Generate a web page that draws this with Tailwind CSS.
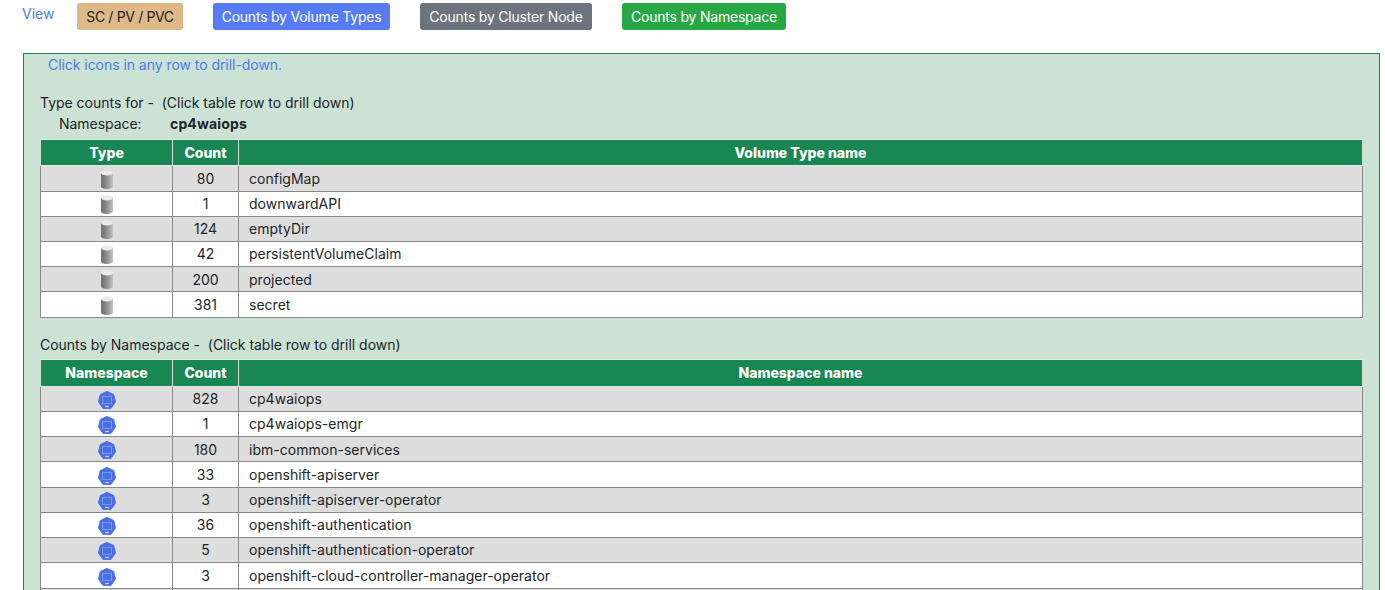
<!DOCTYPE html>
<html lang="en"><head><meta charset="utf-8"><title>Counts by Namespace</title>
<script src="https://cdn.jsdelivr.net/npm/@tailwindcss/browser@4"></script></head>
<body class="bg-white h-[590px] overflow-hidden font-['Inter','Liberation_Sans',sans-serif] text-[14px] leading-[21px] text-[#212529]">
<svg class="absolute w-0 h-0"><defs>
<linearGradient id="g"><stop offset="0" stop-color="#757575"/><stop offset=".25" stop-color="#7a7a7a"/><stop offset=".75" stop-color="#a8a8a8"/><stop offset="1" stop-color="#c4c4c4"/></linearGradient>
<symbol id="cyl" viewBox="0 0 12 19"><path d="M0 3v13.500a6 2.500 0 0 0 12 0V3z" fill="url(#g)"/><ellipse cx="6" cy="2.800" rx="6" ry="2.600" fill="#eaeaea"/></symbol>
<symbol id="ns" viewBox="0 0 18 18"><path d="M9 .300 15.800 3.500 17.600 10.900 13 17.500H5L.400 10.900 2.200 3.500z" fill="#4b6de5" stroke="#4b6de5" stroke-width=".8" stroke-linejoin="round"/><rect x="4.500" y="5.500" width="9" height="7" fill="none" stroke="#6f9bf0"/><path d="M7.200 15.500h3.600" stroke="#c5d2fa" stroke-width="1.300"/></symbol>
</defs></svg>
<nav class="flex items-start pl-[22px] pt-[3px] h-[53px]">
<a class="w-[55px] text-[#4a80e8]">View</a>
<a class="w-[106px] h-[27px] mr-[30px] rounded-[3px] bg-[#deb887] text-center leading-[28px] whitespace-nowrap tracking-[-0.35px]">SC / PV / PVC</a>
<a class="w-[177px] h-[27px] mr-[30px] rounded-[3px] bg-[#567bf3] text-white text-center leading-[28px] whitespace-nowrap tracking-[-0.22px]">Counts by Volume Types</a>
<a class="w-[172px] h-[27px] mr-[30px] rounded-[3px] bg-[#6c757d] text-white text-center leading-[28px] whitespace-nowrap tracking-[-0.2px]">Counts by Cluster Node</a>
<a class="w-[164px] h-[27px] rounded-[3px] bg-[#28a745] text-white text-center leading-[28px] whitespace-nowrap tracking-[-0.22px]">Counts by Namespace</a>
</nav>
<main class="ml-[23px] w-[1357px] h-[537px] overflow-hidden border border-b-0 border-[#198754] bg-[#cce2d5] pl-4">
<div class="pl-2 h-[38px] text-[#4a80e8] tracking-[-0.05px]">Click icons in any row to drill-down.</div>
<div class="whitespace-pre tracking-[-0.02px]">Type counts for -  (Click table row to drill down)</div>
<div class="flex pl-[19px] h-[26px]"><span class="w-[111px] tracking-[-0.05px]">Namespace:</span><b class="tracking-[0.15px]">cp4waiops</b></div>
<section id="types" class="w-[1323px]"></section>
<div class="whitespace-pre h-[41px] pt-[16px] tracking-[-0.02px]">Counts by Namespace -  (Click table row to drill down)</div>
<section id="spaces" class="w-[1323px]"></section>
</main>
<script>
function table(id, heads, headHeight, icon, rows) {
  let h = `<div class="grid grid-cols-[133px_66px_1124px] border-y border-[#dfe8e2] font-extrabold text-white text-center leading-[25px]" style="height:${headHeight}px">` +
    heads.map((t, i) => `<div class="bg-[#198754] ${['border-r border-[#ddd] ml-px', 'border-r border-[#ddd]', 'mr-px'][i]}">${t}</div>`).join('') + '</div>';
  rows.forEach(([n, t, height, line, top], i) => {
    h += `<div class="grid grid-cols-[132px_66px_1123px] overflow-hidden border-l border-r border-[#888] ${height > 1 ? 'border-b' : ''} ${i % 2 ? 'bg-white' : 'bg-[#ddd]'}" style="height:${height}px;line-height:${line}px">` +
      `<div class="border-r border-[#888] flex justify-center" style="padding-top:${top}px">${n === '' ? '' : icon}</div><div class="border-r border-[#888] text-center">${n}</div><div class="pl-[10px] tracking-[0.02px]">${t}</div></div>`;
  });
  document.getElementById(id).innerHTML = h;
}
table('types', ['Type', 'Count', 'Volume Type name'], 27, '<svg class="w-3 h-[19px]"><use href="#cyl"/></svg>',
 [[80,'configMap',26,25,4],[1,'downwardAPI',25,23,3],[124,'emptyDir',25,23,3],[42,'persistentVolumeClaim',25,23,3],[200,'projected',25,25,3],[381,'secret',26,25,4]]);
table('spaces', ['Namespace', 'Count', 'Namespace name'], 28, '<svg class="w-[18px] h-[18px]"><use href="#ns"/></svg>',
 [[828,'cp4waiops',25,23,4],[1,'cp4waiops-emgr',25,23,4],[180,'ibm-common-services',25,25,4],[33,'openshift-apiserver',26,25,5],[3,'openshift-apiserver-operator',25,23,4],[36,'openshift-authentication',25,23,4],[5,'openshift-authentication-operator',25,23,4],[3,'openshift-cloud-controller-manager-operator',26,25,5],['','',1,1,0]]);
</script>
</body></html>
